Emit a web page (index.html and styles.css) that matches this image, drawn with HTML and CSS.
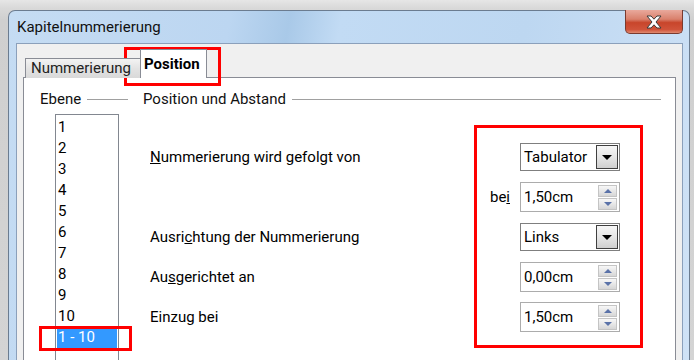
FILE: index.html
```html
<!DOCTYPE html>
<html lang="de">
<head>
    <meta charset="utf-8">
    <title>Kapitelnummerierung</title>
    <link rel="stylesheet" href="styles.css">
</head>
<body>
    <div class="desk">
        <div class="fenster">
            <div class="titelleiste">
                <span class="titel">Kapitelnummerierung</span>
                <div class="schliessen">
                    <svg width="18" height="14" viewBox="0 0 18 14">
                        <path d="M2 1h4l3 3.2L12 1h4l-5 6 5 6h-4l-3-3.2L6 13H2l5-6z" fill="#fff" stroke="#3b3b3b" stroke-width="1" stroke-linejoin="round"/>
                    </svg>
                </div>
            </div>
            <div class="inhalt">
                <div class="reiter">
                    <div class="reiter-tab">Nummerierung</div>
                    <div class="reiter-tab aktiv">Position</div>
                </div>
                <div class="seite">
                    <div class="ebenen">
                        <div class="ueberschrift"><span>Ebene</span></div>
                        <ul class="liste">
                            <li>1</li>
                            <li>2</li>
                            <li>3</li>
                            <li>4</li>
                            <li>5</li>
                            <li>6</li>
                            <li>7</li>
                            <li>8</li>
                            <li>9</li>
                            <li>10</li>
                            <li class="gewaehlt">1 - 10</li>
                        </ul>
                    </div>
                    <div class="position">
                        <div class="ueberschrift"><span>Position und Abstand</span></div>
                        <div class="zeilen">
                            <div class="zeile">
                                <label><u>N</u>ummerierung wird gefolgt von</label>
                                <div class="auswahl">
                                    <span>Tabulator</span>
                                    <div class="pfeil"><i></i></div>
                                </div>
                            </div>
                            <div class="zeile">
                                <label class="klein">be<u>i</u></label>
                                <div class="dreh">
                                    <span>1,50cm</span>
                                    <div class="dreh-knoepfe">
                                        <div class="knopf hoch"><i></i></div>
                                        <div class="knopf runter"><i></i></div>
                                    </div>
                                </div>
                            </div>
                            <div class="zeile">
                                <label>Ausri<u>c</u>htung der Nummerierung</label>
                                <div class="auswahl">
                                    <span>Links</span>
                                    <div class="pfeil"><i></i></div>
                                </div>
                            </div>
                            <div class="zeile">
                                <label>Au<u>s</u>gerichtet an</label>
                                <div class="dreh">
                                    <span>0,00cm</span>
                                    <div class="dreh-knoepfe">
                                        <div class="knopf hoch"><i></i></div>
                                        <div class="knopf runter"><i></i></div>
                                    </div>
                                </div>
                            </div>
                            <div class="zeile">
                                <label>Einzu<u>g</u> bei</label>
                                <div class="dreh">
                                    <span>1,50cm</span>
                                    <div class="dreh-knoepfe">
                                        <div class="knopf hoch"><i></i></div>
                                        <div class="knopf runter"><i></i></div>
                                    </div>
                                </div>
                            </div>
                        </div>
                    </div>
                </div>
            </div>
        </div>
        <div class="markierung mark-reiter"></div>
        <div class="markierung mark-liste"></div>
        <div class="markierung mark-felder"></div>
    </div>
</body>
</html>
```

FILE: styles.css
```css
body {
    margin: 0;
    overflow: hidden;
    font-family: Roboto, "Noto Sans", sans-serif;
    font-size: 15px;
    color: #000;
    background: #d6d6d6;
}
.desk {
    position: relative;
    height: 360px;
    padding: 10px 0 0 8px;
    box-sizing: border-box;
    overflow: hidden;
    background: linear-gradient(to bottom, #e6e6e6 0, #d9d9d9 8px, #cfcfcf 20px, #d4d4d4 100%);
}
.fenster {
    width: 682px;
    height: 350px;
    box-sizing: border-box;
    border: 1px solid #6b7c90;
    border-bottom: none;
    border-radius: 7px 7px 0 0;
    padding: 0 6px 0 7px;
    background: linear-gradient(100deg, #c5dcf3 0%, #bcd6f1 30%, #a9c9e8 38%, #c2dbf4 45%, #bdd7f1 70%, #cfe2f6 100%);
}
.titelleiste {
    display: flex;
    align-items: flex-start;
    height: 32px;
}
.titel {
    flex: 1;
    padding: 7px 0 0 1px;
    color: #111;
}
.schliessen {
    width: 58px;
    height: 24px;
    margin-top: -1px;
    box-sizing: border-box;
    border: 1px solid #7a3a2e;
    border-top: none;
    border-radius: 0 0 5px 5px;
    background: linear-gradient(to bottom, #e9a99c 0, #d9806c 40%, #c8452b 55%, #d0533a 85%, #e08a70 100%);
    display: flex;
    align-items: center;
    justify-content: center;
}
.inhalt {
    height: 317px;
    box-sizing: border-box;
    border: 1px solid #8ba0bb;
    border-bottom: none;
    background: #f0f0f0;
    padding: 6px 6px 0 6px;
}
.reiter {
    display: flex;
    align-items: flex-end;
    height: 28px;
    padding-left: 2px;
    position: relative;
    z-index: 1;
    margin-bottom: -1px;
}
.reiter-tab {
    height: 20px;
    box-sizing: border-box;
    border: 1px solid #898c95;
    border-bottom: none;
    padding: 0 9px 0 5px;
    line-height: 19px;
    color: #222;
    background: linear-gradient(to bottom, #f3f3f3, #e3e3e3 50%, #d9d9d9);
}
.reiter-tab.aktiv {
    height: 29px;
    margin-left: -1px;
    padding: 4px 6px 0 3px;
    background: #fff;
    font-weight: bold;
    color: #000;
    line-height: 20px;
}
.seite {
    display: flex;
    height: 283px;
    box-sizing: border-box;
    overflow: hidden;
    border: 1px solid #898c95;
    border-bottom: none;
    background: #fff;
    padding: 11px 0 0 16px;
}
.ebenen {
    width: 88px;
}
.position {
    width: 518px;
    margin-left: 15px;
}
.ueberschrift {
    display: flex;
    align-items: center;
    height: 20px;
    color: #111;
}
.ueberschrift::after {
    content: "";
    flex: 1;
    margin-left: 6px;
    border-top: 1px solid #a0a0a0;
}
.liste {
    list-style: none;
    margin: 5px 0 0 15px;
    padding: 2px 0 0 0;
    width: 64px;
    height: 260px;
    box-sizing: border-box;
    border: 1px solid #828790;
}
.liste li {
    height: 21px;
    line-height: 21px;
    margin: 0 1px;
    padding-left: 1px;
}
.liste li.gewaehlt {
    background: #3399ff;
    color: #fff;
}
.zeilen {
    margin-top: 28px;
    padding: 0 41px 0 7px;
}
.zeile {
    display: flex;
    align-items: center;
    height: 40px;
}
.zeile label {
    flex: 1;
}
.zeile label.klein {
    text-align: right;
    margin-right: 10px;
}
.auswahl, .dreh {
    display: flex;
    align-items: center;
    width: 100px;
    box-sizing: border-box;
    background: #fff;
}
.auswahl {
    height: 28px;
    border: 1px solid #7f7f7f;
    padding: 1px;
}
.dreh {
    height: 30px;
    border: 1px solid #acacac;
    padding: 1px 2px 1px 1px;
}
.auswahl span, .dreh span {
    flex: 1;
    padding-left: 2px;
}
.pfeil {
    width: 22px;
    height: 24px;
    box-sizing: border-box;
    border: 1px solid #3f3f3f;
    background: linear-gradient(to bottom, #f6f6f6, #e6e6e6 50%, #cfcfcf);
    display: flex;
    align-items: center;
    justify-content: center;
}
.pfeil i {
    border-left: 5px solid transparent;
    border-right: 5px solid transparent;
    border-top: 5px solid #000;
}
.dreh-knoepfe {
    display: flex;
    flex-direction: column;
    gap: 1px;
}
.knopf {
    width: 19px;
    height: 12px;
    box-sizing: border-box;
    border: 1px solid #c4c4c4;
    background: linear-gradient(to bottom, #f7f7f7, #e4e4e4 60%, #d6d6d6);
    display: flex;
    align-items: center;
    justify-content: center;
}
.knopf.hoch i {
    border-left: 4px solid transparent;
    border-right: 4px solid transparent;
    border-bottom: 4px solid #5a72a8;
}
.knopf.runter i {
    border-left: 4px solid transparent;
    border-right: 4px solid transparent;
    border-top: 4px solid #5a72a8;
}
.markierung {
    position: absolute;
    box-sizing: border-box;
    border: 3px solid #ff0000;
}
.mark-reiter {
    left: 124px;
    top: 47px;
    width: 97px;
    height: 39px;
}
.mark-liste {
    left: 39px;
    top: 326px;
    width: 93px;
    height: 25px;
}
.mark-felder {
    left: 474px;
    top: 125px;
    width: 169px;
    height: 223px;
}
```
